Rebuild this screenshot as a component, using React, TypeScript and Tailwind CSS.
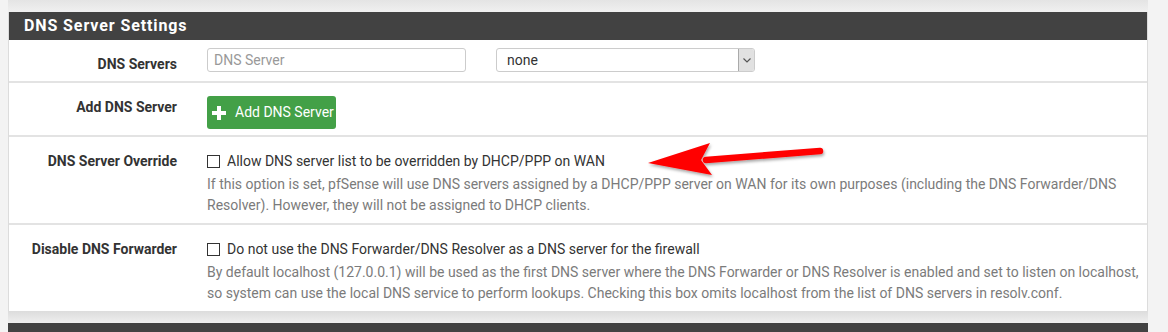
import { type JSX } from "react"

const Label = ({ text }: { text: string }): JSX.Element => (
  <div className="w-[184px] shrink-0 pr-[16px] pt-[14px] text-right text-[14px] font-bold leading-[20px] text-[#333]">
    {text}
  </div>
)

const Checkbox = (): JSX.Element => (
  <span className="mr-[7px] inline-block h-[13px] w-[13px] border border-[#333] bg-white align-[-2px]" />
)

const RedArrow = (): JSX.Element => (
  <svg className="pointer-events-none absolute left-[638px] top-[138px]" width="200" height="50" viewBox="0 0 200 50">
    <defs>
      <filter id="sh" x="-20%" y="-50%" width="140%" height="200%">
        <feDropShadow dx="1" dy="2" stdDeviation="1.5" floodColor="#000" floodOpacity="0.35" />
      </filter>
    </defs>
    <g filter="url(#sh)">
      <path d="M68 22 L182 13" stroke="#f00" strokeWidth="6.5" strokeLinecap="round" />
      <path d="M10 25 L72 5 L63 22 L74 37 Z" fill="#f00" />
    </g>
  </svg>
)

export default function App(): JSX.Element {
  return (
    <div className="relative h-[332px] w-[1168px] overflow-hidden bg-[#f3f3f3] font-['Roboto',sans-serif]">
      <div className="ml-[8px] h-[12px] w-[1140px] bg-linear-to-b from-[#e4e4e4] to-[#f0f0f0]" />

      <div className="ml-[8px] w-[1140px] border-x border-[#dcdcdc] bg-white">
        <div className="flex h-[28px] items-center bg-[#424242] pl-[15px] text-[16px] font-bold tracking-[0.9px] text-white">
          DNS Server Settings
        </div>

        <div className="flex h-[43px] border-b-2 border-[#e3e3e3]">
          <Label text="DNS Servers" />
          <div className="flex gap-[30px] pl-[14px] pt-[8px]">
            <div className="flex h-[24px] w-[259px] items-center rounded-[3px] border border-[#ccc] px-[6px] text-[14px] text-[#999]">
              DNS Server
            </div>
            <div className="flex h-[24px] w-[259px] items-center overflow-hidden rounded-[3px] border border-[#ccc] text-[14px] text-[#333]">
              <span className="flex-1 pl-[10px]">none</span>
              <span className="flex h-full w-[16px] items-center justify-center border-l border-[#aaa] bg-[#e1e1e1]">
                <svg width="8" height="5" viewBox="0 0 8 5">
                  <path d="M0.5 0.5 L4 4 L7.5 0.5" fill="none" stroke="#555" strokeWidth="1.2" />
                </svg>
              </span>
            </div>
          </div>
        </div>

        <div className="flex h-[54px] border-b-2 border-[#e3e3e3]">
          <Label text="Add DNS Server" />
          <div className="pl-[14px] pt-[13px]">
            <button className="flex h-[33px] w-[129px] items-center gap-[9px] rounded-[3px] bg-[#43a047] pl-[5px] text-[14px] text-white">
              <svg width="14" height="14" viewBox="0 0 14 14">
                <path d="M5 0h4v5h5v4H9v5H5V9H0V5h5z" fill="#fff" />
              </svg>
              Add DNS Server
            </button>
          </div>
        </div>

        <div className="flex h-[88px] border-b-2 border-[#e3e3e3]">
          <Label text="DNS Server Override" />
          <div className="pl-[14px] pt-[14px] text-[14px]">
            <div className="leading-[20px] text-[#333]">
              <Checkbox />
              Allow DNS server list to be overridden by DHCP/PPP on WAN
            </div>
            <div className="mt-[3px] whitespace-nowrap leading-[21px] text-[#7b7b7b]">
              If this option is set, pfSense will use DNS servers assigned by a DHCP/PPP server on WAN for its own purposes (including the DNS Forwarder/DNS
              <br />
              Resolver). However, they will not be assigned to DHCP clients.
            </div>
          </div>
        </div>

        <div className="flex h-[86px]">
          <Label text="Disable DNS Forwarder" />
          <div className="pl-[14px] pt-[14px] text-[14px]">
            <div className="leading-[20px] text-[#333]">
              <Checkbox />
              Do not use the DNS Forwarder/DNS Resolver as a DNS server for the firewall
            </div>
            <div className="mt-[3px] whitespace-nowrap leading-[21px] text-[#7b7b7b]">
              By default localhost (127.0.0.1) will be used as the first DNS server where the DNS Forwarder or DNS Resolver is enabled and set to listen on localhost,
              <br />
              so system can use the local DNS service to perform lookups. Checking this box omits localhost from the list of DNS servers in resolv.conf.
            </div>
          </div>
        </div>
      </div>

      <div className="ml-[8px] h-[12px] w-[1140px] bg-linear-to-b from-[#dcdcdc] to-[#efefef]" />
      <div className="ml-[8px] h-[20px] w-[1140px] bg-[#424242]" />

      <RedArrow />
    </div>
  )
}
